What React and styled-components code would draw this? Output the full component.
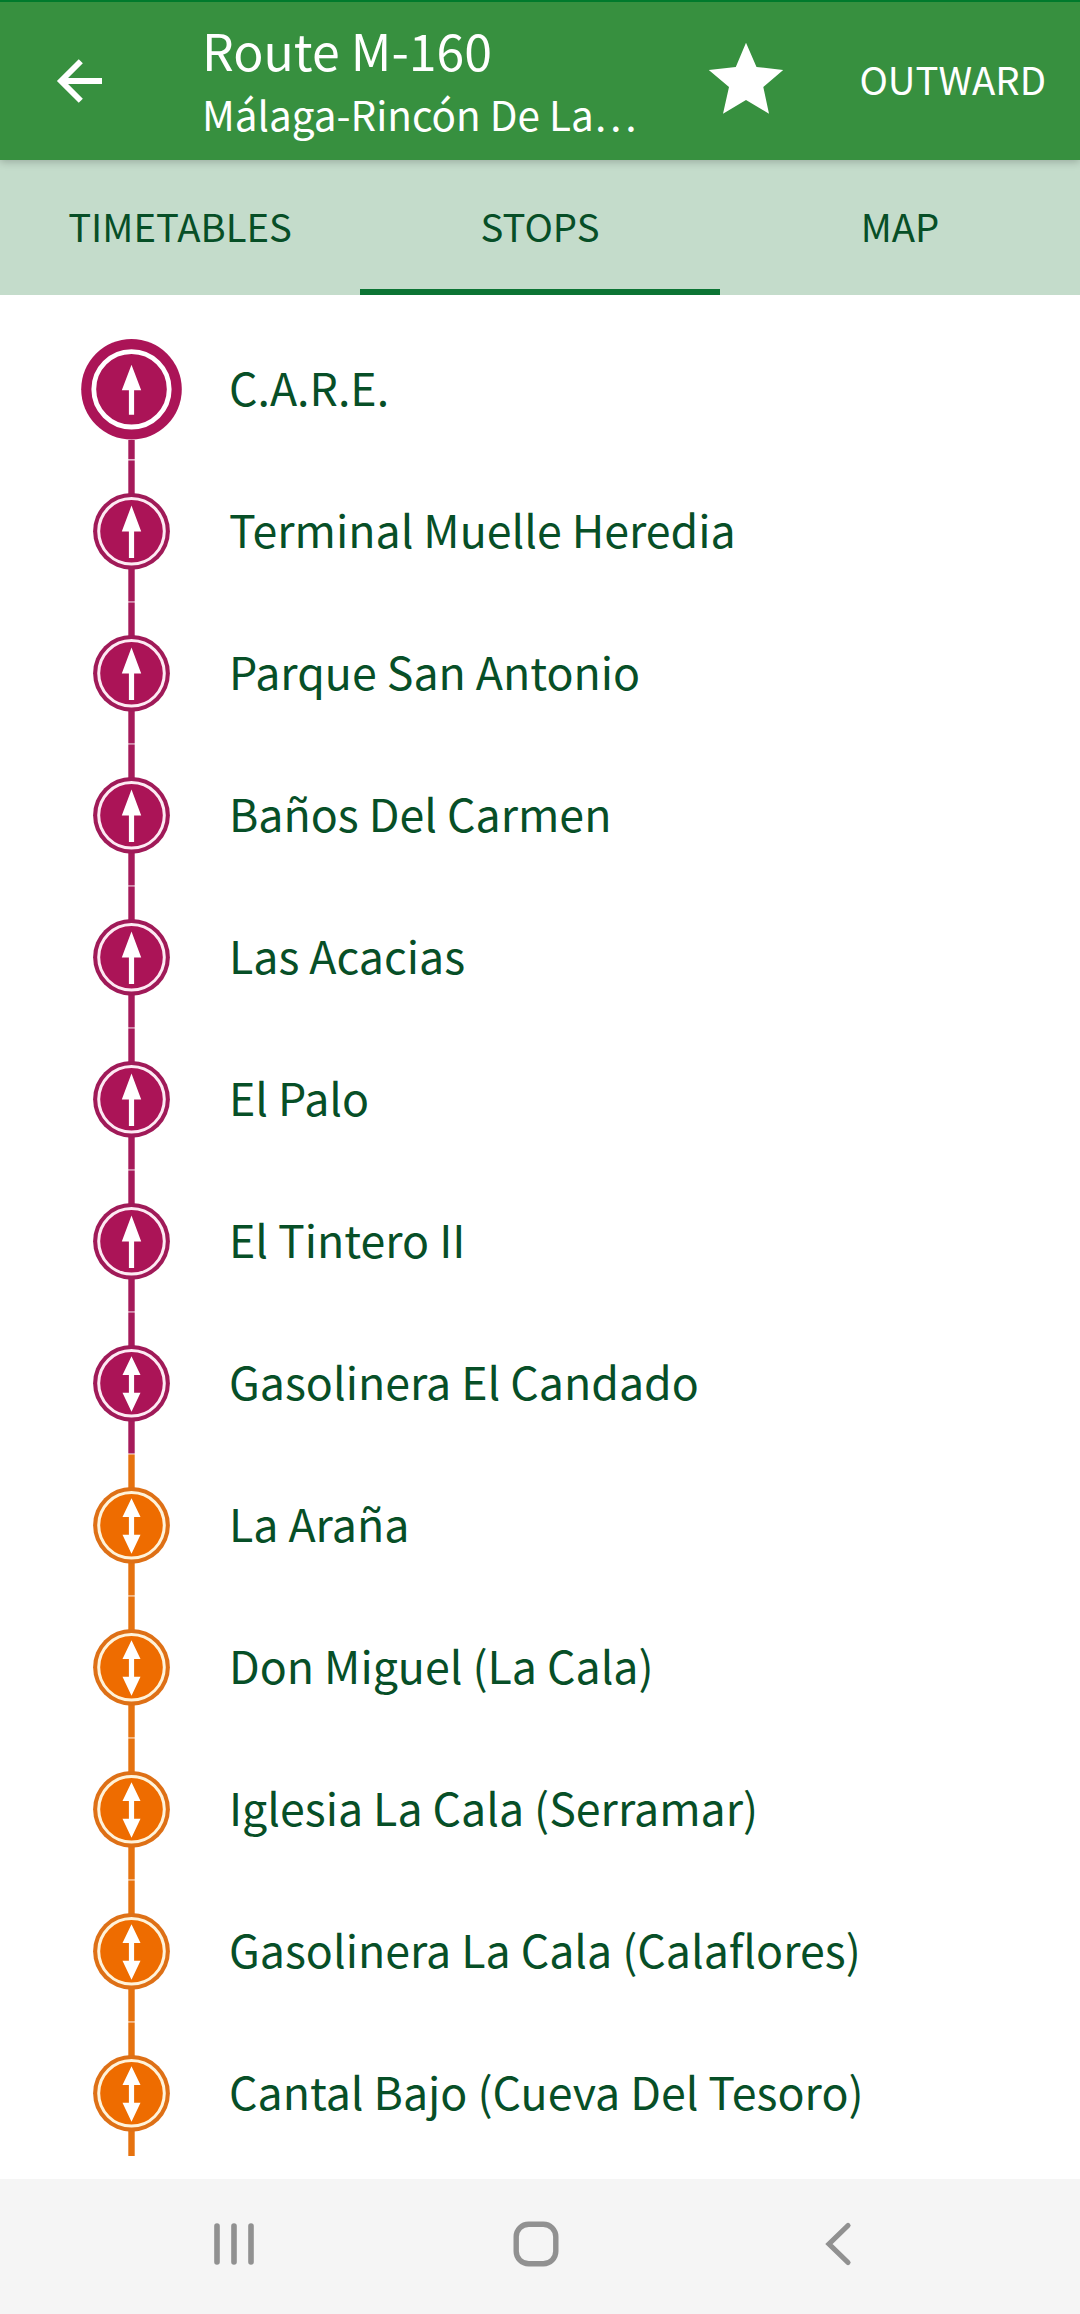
import React from 'react';
import styled, { createGlobalStyle } from 'styled-components'

const MAGENTA = { fill: '#ab1457', edge: '#a01a58', line: '#a61a5a', ring: '#fdeaf3' }
const ORANGE = { fill: '#ee6c00', edge: '#de7016', line: '#e6720f', ring: '#fff3da' }

const GlobalStyle = createGlobalStyle`
  body {
    margin: 0;
    background: #fff;
    font-family: "Noto Sans CJK SC", "Noto Sans", sans-serif;
  }
`
const Screen = styled.div`
  width: 1080px;
  height: 2314px;
  display: flex;
  flex-direction: column;
  overflow: hidden;
`
const Header = styled.header`
  box-sizing: border-box;
  flex: none;
  height: 160px;
  border-top: 2px solid #007a2c;
  background: #37903f;
  color: #fff;
  display: flex;
  align-items: center;
  padding: 0 34px 0 56px;
  box-shadow: 0 2px 8px rgba(0, 0, 0, .22);
  z-index: 1;
`
const BackIcon = styled.svg`
  width: 46px;
  height: 48px;
  margin-right: 100px;
`
const Titles = styled.div`
  width: 440px;
`
const Title = styled.div`
  font-size: 50px;
  line-height: 65px;
  white-space: nowrap;
`
const Subtitle = styled.div`
  font-size: 40.4px;
  line-height: 63px;
  white-space: nowrap;
`
const StarIcon = styled.svg`
  width: 76px;
  height: 76px;
  margin-left: 66px;
  overflow: visible;
`
const Direction = styled.div`
  margin-left: auto;
  padding-bottom: 4px;
  font-size: 38.3px;
  line-height: 58px;
`
const Tabs = styled.nav`
  flex: none;
  height: 135px;
  display: grid;
  grid-template-columns: repeat(3, 1fr);
  background: #c4dccb;
`
const Tab = styled.div`
  box-sizing: border-box;
  border-bottom: 6px solid ${props => props.$active ? '#0c7434' : 'transparent'};
  padding-top: 2px;
  display: flex;
  align-items: center;
  justify-content: center;
  font-size: 38.3px;
  color: #074f27;
`
const Content = styled.main`
  box-sizing: border-box;
  flex: none;
  height: 1884px;
  padding: 23px 0;
`
const StopList = styled.div`
  height: 1838px;
  overflow: hidden;
`
const Stop = styled.div`
  height: 142px;
  display: flex;
  align-items: center;
  padding-left: 71px;
`
const Marker = styled.svg`
  flex: none;
  width: 121px;
  height: 142px;
  margin-right: 37px;
`
const StopName = styled.div`
  padding-bottom: 4px;
  font-size: 44.7px;
  line-height: 66px;
  color: #074f27;
  white-space: nowrap;
`
const NavBar = styled.footer`
  flex: 1;
  background: #f5f5f5;
  display: grid;
  grid-template-columns: 301px 311px auto;
  align-items: center;
  padding: 0 0 5px 212px;
`
const NavIcon = styled.svg`
  width: ${props => props.$width}px;
  height: 46px;
`

const stops = [
  { name: 'C.A.R.E.', zone: MAGENTA, first: true },
  { name: 'Terminal Muelle Heredia', zone: MAGENTA },
  { name: 'Parque San Antonio', zone: MAGENTA },
  { name: 'Baños Del Carmen', zone: MAGENTA },
  { name: 'Las Acacias', zone: MAGENTA },
  { name: 'El Palo', zone: MAGENTA },
  { name: 'El Tintero II', zone: MAGENTA },
  { name: 'Gasolinera El Candado', zone: MAGENTA, both: true },
  { name: 'La Araña', zone: ORANGE, both: true },
  { name: 'Don Miguel (La Cala)', zone: ORANGE, both: true },
  { name: 'Iglesia La Cala (Serramar)', zone: ORANGE, both: true },
  { name: 'Gasolinera La Cala (Calaflores)', zone: ORANGE, both: true },
  { name: 'Cantal Bajo (Cueva Del Tesoro)', zone: ORANGE, both: true }
]

const UP = 'M60.5 45.6 L70.2 71.6 H63.1 V98 H57.9 V71.6 H50.8 Z'
const UP_FIRST = 'M60.5 46.8 L70.2 72.3 H63.1 V96.8 H57.9 V72.3 H50.8 Z'
const UP_DOWN = 'M60.5 44.3 L69.5 63 H63.1 V80.7 H69.5 L60.5 99.7 L51.5 80.7 H57.9 V63 H51.5 Z'

const StopMarker = ({ zone, first, both }) => (
  <Marker viewBox="0 0 121 142">
    <rect x="57.3" y={first ? 122 : 0.4} width="6.4" height={first ? 19.3 : 141.1} fill={zone.line} />
    {first ? (
      <>
        <circle cx="60.5" cy="71.3" r="50.3" fill={zone.fill} />
        <circle cx="60.5" cy="71.3" r="37.7" fill="none" stroke="#fff" strokeWidth="4.8" />
      </>
    ) : (
      <>
        <circle cx="60.5" cy="71.3" r="38.4" fill={zone.edge} />
        <circle cx="60.5" cy="71.3" r="32.8" fill={zone.fill} stroke={zone.ring} strokeWidth="3" />
      </>
    )}
    <path d={both ? UP_DOWN : first ? UP_FIRST : UP} fill="#fff" />
  </Marker>
)

function App() {
  return (
    <>
      <GlobalStyle />
      <Screen>
        <Header>
          <BackIcon viewBox="0 0 46 48" fill="none" stroke="#fff" strokeWidth="5.8">
            <path d="M24.8 4.2 L5 24 L24.8 43.8 M5 24 H46" />
          </BackIcon>
          <Titles>
            <Title>Route M-160</Title>
            <Subtitle>Málaga-Rincón De La…</Subtitle>
          </Titles>
          <StarIcon viewBox="0 0 76 76" fill="#fff">
            <path d="M38 -0.3 L48.5 24 L75.2 27 L55.3 44 L61 70.7 L38 57 L15 70.7 L21 44 L0.8 27 L27.8 24 Z" />
          </StarIcon>
          <Direction>OUTWARD</Direction>
        </Header>
        <Tabs>
          <Tab>TIMETABLES</Tab>
          <Tab $active>STOPS</Tab>
          <Tab>MAP</Tab>
        </Tabs>
        <Content>
          <StopList>
            {stops.map(stop => (
              <Stop key={stop.name}>
                <StopMarker {...stop} />
                <StopName>{stop.name}</StopName>
              </Stop>
            ))}
          </StopList>
        </Content>
        <NavBar>
          <NavIcon $width={44} viewBox="0 0 44 46" fill="none" stroke="#919191" strokeWidth="5.6" strokeLinecap="round">
            <path d="M5 5 V41 M22 5 V41 M39 5 V41" />
          </NavIcon>
          <NavIcon $width={46} viewBox="0 0 46 46" fill="none" stroke="#919191" strokeWidth="5.4">
            <rect x="3.2" y="3.2" width="39.6" height="39.6" rx="12.5" />
          </NavIcon>
          <NavIcon $width={28} viewBox="0 0 28 46" fill="none" stroke="#919191" strokeWidth="5.2" strokeLinecap="round">
            <path d="M24 4.5 L5 23 L24 41.5" />
          </NavIcon>
        </NavBar>
      </Screen>
    </>
  )
}

export default App;
